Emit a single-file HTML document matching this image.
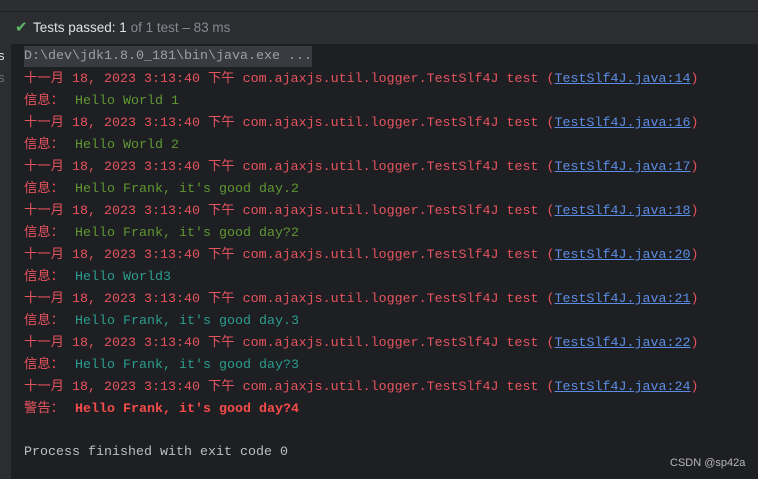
<!DOCTYPE html>
<html><head><meta charset="utf-8"><style>
body{margin:0;width:758px;height:479px;background:#1e1f22;position:relative;overflow:hidden;font-family:"Liberation Mono",monospace;font-size:13.33px}
.top{position:absolute;left:0;top:0;width:758px;height:11px;background:#2b2d30}
.sep{position:absolute;left:0;top:11px;width:758px;height:1px;background:#1e1f22}
.hdr{position:absolute;left:0;top:12px;width:758px;height:32px;background:#2b2d30;font-family:"Liberation Sans",sans-serif;font-size:13.5px;color:#dfe1e5;line-height:32px}
.gut{position:absolute;left:0;top:44px;width:11px;height:435px;background:#2b2d30;overflow:hidden}
.gut span{position:absolute;left:-2px;font-family:"Liberation Sans",sans-serif;font-size:13px}
.ln{position:absolute;left:24px;height:22px;line-height:22px;white-space:pre}
.r{color:#e5535f}.g{color:#5f9733}.t{color:#2a9d8f}.w{color:#f44b4b;font-weight:bold}
.a{color:#5c8ee6;text-decoration:underline}
.m{position:absolute;left:51px;top:0}
.cj{font-family:"Noto Sans CJK SC",sans-serif;display:inline-block;height:22px;line-height:22px;vertical-align:top;position:relative;top:-3px}
</style></head><body>
<div class="top"></div><div class="sep"></div>
<div class="hdr"><span style="position:absolute;left:15px;top:0;color:#5fb865;font-size:15px">✔</span><span style="position:absolute;left:33px">Tests passed: 1 <span style="color:#868a91">of 1 test – 83 ms</span></span></div>
<div class="gut"><span style="top:4px;color:#dfe1e5">s</span><span style="top:26px;color:#6f737a">s</span></div>
<div class="ln" style="top:46px;color:#9da0a8;background:#393b40;width:288px;line-height:21px;height:21px">D:\dev\jdk1.8.0_181\bin\java.exe ...</div>
<div id="c"></div>
<div class="ln" style="top:442px;color:#bcbec4">Process finished with exit code 0</div>
<div style="position:absolute;left:670px;top:457px;font-family:'Liberation Sans',sans-serif;font-size:11px;color:#b8b8b8">CSDN @sp42a</div>
<script>
var d=[["14","g","Hello World 1"],["16","g","Hello World 2"],["17","g","Hello Frank, it's good day.2"],["18","g","Hello Frank, it's good day?2"],["20","t","Hello World3"],["21","t","Hello Frank, it's good day.3"],["22","t","Hello Frank, it's good day?3"],["24","w","Hello Frank, it's good day?4"]];
var h="";d.forEach(function(x,i){var y1=69+i*44,y2=y1+22;
h+='<div class="ln r" style="top:'+y1+'px"><span class="cj">十一月</span> 18, 2023 3:13:40 <span class="cj">下午</span> com.ajaxjs.util.logger.TestSlf4J test (<span class="a">TestSlf4J.java:'+x[0]+'</span>)</div>';
h+='<div class="ln r" style="top:'+y2+'px;width:700px"><span class="cj">'+(x[1]=="w"?"警告":"信息")+'：</span><span class="m '+x[1]+'">'+x[2]+'</span></div>';});
document.getElementById("c").innerHTML=h;
</script>
</body></html>
